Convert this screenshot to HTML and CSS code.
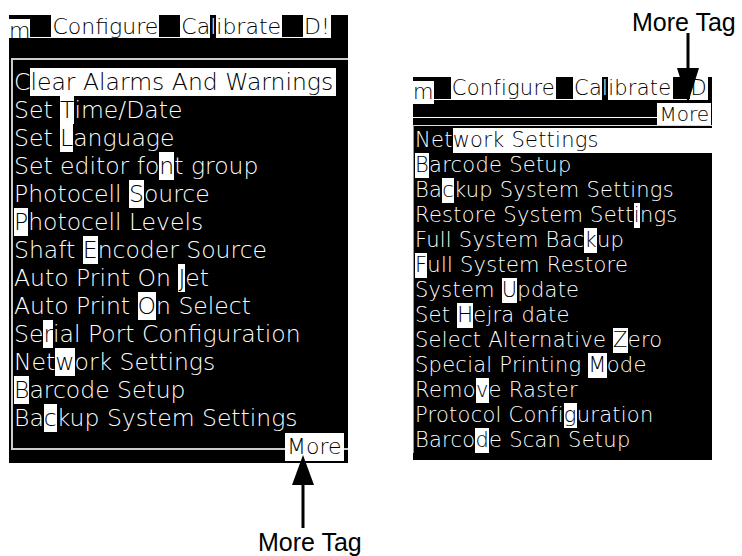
FILE: index.html
```html
<!doctype html>

<html lang="en">
<head>
  <meta charset="utf-8">
  <title>More Tag</title>
  <link rel="stylesheet" href="styles.css">
</head>

<body>
  <div class="page">

    <div class="screen main">
      <div class="tabs">
        <span class="tab cut">m</span><span class="gap"></span><span class="tab">Configure</span><span class="gap"></span><span class="tab">Ca<span class="hot">l</span>ibrate</span><span class="gap"></span><span class="tab">D!</span>
      </div>
      <div class="spacer"></div>
      <ul class="menu">
        <li>C<span class="sel">lear Alarms And Warnings</span></li>
        <li>Set&nbsp;<span class="key">T</span>ime/Date</li>
        <li>Set&nbsp;<span class="key">L</span>anguage</li>
        <li>Set editor fo<span class="key">n</span>t group</li>
        <li>Photocell&nbsp;<span class="key">S</span>ource</li>
        <li><span class="key">P</span>hotocell Levels</li>
        <li>Shaft&nbsp;<span class="key">E</span>ncoder Source</li>
        <li>Auto Print On&nbsp;<span class="key">J</span>et</li>
        <li>Auto Print&nbsp;<span class="key">O</span>n Select</li>
        <li>Se<span class="key">r</span>ial Port Configuration</li>
        <li>Net<span class="key">w</span>ork Settings</li>
        <li><span class="key">B</span>arcode Setup</li>
        <li>Ba<span class="key">c</span>kup System Settings</li>
        <span class="more">More</span>
      </ul>
    </div>

    <div class="screen side">
      <div class="tabs">
        <span class="tab cut">m</span><span class="gap"></span><span class="tab">Configure</span><span class="gap"></span><span class="tab">Ca<span class="hot">l</span>ibrate</span><span class="gap"></span><span class="tab">D</span>
      </div>
      <div class="more-row">
        <span class="rule"></span><span class="more">More</span>
      </div>
      <ul class="menu">
        <li>Net<span class="key">w</span><span class="sel fill">ork Settings</span></li>
        <li><span class="key">B</span>arcode Setup</li>
        <li>Ba<span class="key">c</span>kup System Settings</li>
        <li>Restore System Sett<span class="key">i</span>ngs</li>
        <li>Full System Bac<span class="key">k</span>up</li>
        <li><span class="key">F</span>ull System Restore</li>
        <li>System&nbsp;<span class="key">U</span>pdate</li>
        <li>Set&nbsp;<span class="key">H</span>ejra date</li>
        <li>Select Alternative&nbsp;<span class="key">Z</span>ero</li>
        <li>Special Printing&nbsp;<span class="key">M</span>ode</li>
        <li>Remo<span class="key">v</span>e Raster</li>
        <li>Protocol Confi<span class="key">g</span>uration</li>
        <li>Barco<span class="key">d</span>e Scan Setup</li>
      </ul>
    </div>

    <span class="tag tag-top">More Tag</span>
    <svg class="arrow arrow-top" width="24" height="75" viewBox="0 0 24 75">
      <rect x="10.5" y="3" width="3" height="37" fill="#000"/>
      <polygon points="1,38 23,38 12,73" fill="#000"/>
    </svg>

    <svg class="arrow arrow-bottom" width="24" height="78" viewBox="0 0 24 78">
      <polygon points="1,33 23,33 12,3" fill="#000"/>
      <rect x="10.5" y="32" width="3" height="44" fill="#000"/>
    </svg>
    <span class="tag tag-bottom">More Tag</span>

  </div>
</body>
</html>
```

FILE: styles.css
```css
body {
  margin: 0;
  background: white;
}

.page {
  position: relative;
  width: 742px;
  height: 556px;
  display: flex;
  align-items: flex-start;
  gap: 65px;
  padding: 15px 0 0 9px;
  box-sizing: border-box;
}

.screen {
  background: black;
  color: white;
  font-family: "DejaVu Sans", sans-serif;
  font-weight: 200;
  white-space: nowrap;
  overflow: hidden;
}

.screen ul {
  list-style: none;
  margin: 0;
}

.screen li {
  display: flex;
}

.tabs {
  display: flex;
  align-items: flex-start;
}

.tab {
  background: white;
  color: black;
  padding: 0 1px;
}

.tab.cut {
  padding: 0;
  border-top: 4px solid black;
}

.gap {
  align-self: stretch;
  border-bottom: 1px solid white;
  box-sizing: border-box;
}

.hot {
  background: black;
  color: white;
}

.key {
  background: white;
  color: black;
}

.sel {
  background: white;
  color: black;
  padding-right: 3px;
}

.sel.fill {
  flex: 1;
}

.more {
  background: white;
  color: black;
  border: 1px solid white;
  padding: 0 1px;
}

/* left screen, first page */
.main {
  width: 339px;
  height: 448px;
  font-size: 23.5px;
}

.main .tabs {
  height: 23px;
  font-size: 22px;
}

.main .tab {
  height: 23px;
  line-height: 23px;
  box-sizing: border-box;
}

.main .gap {
  width: 21px;
}

.main .spacer {
  height: 20px;
}

.main .menu {
  position: relative;
  margin-left: 2px;
  padding: 8px 0 16px 1px;
  border-left: 2px solid #ccc;
  border-top: 2px solid #ccc;
  border-bottom: 2px solid #ccc;
}

.main li {
  line-height: 28px;
  height: 28px;
}

.main .more {
  position: absolute;
  left: 272px;
  bottom: -13px;
  height: 26px;
  line-height: 26px;
  font-size: 22px;
}

/* right screen, scrolled page */
.side {
  width: 299px;
  height: 383px;
  margin-top: 62px;
  font-size: 21px;
  letter-spacing: 0.25px;
}

.side .tabs {
  height: 23px;
}

.side .tab {
  height: 23px;
  line-height: 23px;
}

.side .gap {
  width: 17px;
}

.more-row {
  display: flex;
  align-items: flex-end;
  height: 25px;
}

.more-row .rule {
  flex: 1;
  height: 17px;
  border-bottom: 1px solid white;
  align-self: flex-start;
}

.more-row .more {
  height: 20px;
  line-height: 20px;
  margin-right: 1px;
  font-size: 20px;
  letter-spacing: 0;
}

.side .menu {
  padding: 2px 0 0 1px;
  border-top: 1px solid #ddd;
  border-left: 1px solid #999;
}

.side li {
  line-height: 25px;
  height: 25px;
}

/* callouts */
.tag {
  position: absolute;
  font-family: "Liberation Sans", Arial, sans-serif;
  font-size: 25px;
  line-height: 25px;
  color: black;
}

.tag-top {
  left: 632px;
  top: 10px;
}

.tag-bottom {
  left: 258px;
  top: 530px;
}

.arrow {
  position: absolute;
}

.arrow-top {
  left: 676px;
  top: 30px;
}

.arrow-bottom {
  left: 291px;
  top: 452px;
}
```
